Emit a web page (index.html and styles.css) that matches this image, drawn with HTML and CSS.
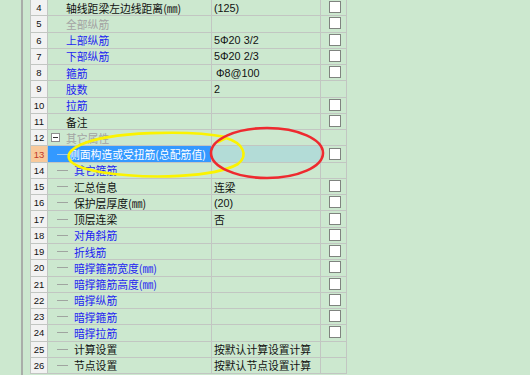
FILE: index.html
```html
<!DOCTYPE html>
<html lang="zh-CN">
<head>
    <meta charset="UTF-8">
    <title>属性编辑</title>
    <link rel="stylesheet" href="styles.css">
</head>
<body>
    <div class="view">
        <div class="edge"></div>
        <div class="sheet">
            <div class="row"><div class="num">4</div><div class="name">轴线距梁左边线距离(㎜)</div><div class="val">(125)</div><div class="chk"><span class="box"></span></div></div>
            <div class="row"><div class="num">5</div><div class="name gray">全部纵筋</div><div class="val"></div><div class="chk"><span class="box"></span></div></div>
            <div class="row"><div class="num">6</div><div class="name blue">上部纵筋</div><div class="val">5Φ20 3/2</div><div class="chk"><span class="box"></span></div></div>
            <div class="row"><div class="num">7</div><div class="name blue">下部纵筋</div><div class="val">5Φ20 2/3</div><div class="chk"><span class="box"></span></div></div>
            <div class="row"><div class="num">8</div><div class="name blue">箍筋</div><div class="val indent">Φ8@100</div><div class="chk"><span class="box"></span></div></div>
            <div class="row"><div class="num">9</div><div class="name blue">肢数</div><div class="val">2</div><div class="chk"></div></div>
            <div class="row"><div class="num">10</div><div class="name blue">拉筋</div><div class="val"></div><div class="chk"><span class="box"></span></div></div>
            <div class="row"><div class="num">11</div><div class="name">备注</div><div class="val"></div><div class="chk"><span class="box"></span></div></div>
            <div class="row"><div class="num">12</div><div class="name group gray"><span class="fold"></span>其它属性</div><div class="val"></div><div class="chk"></div></div>
            <div class="row selected"><div class="num">13</div><div class="name child"><span class="branch"></span>侧面构造或受扭筋(总配筋值)</div><div class="val"></div><div class="chk"><span class="box"></span></div></div>
            <div class="row"><div class="num">14</div><div class="name child blue"><span class="branch"></span>其它箍筋</div><div class="val"></div><div class="chk"></div></div>
            <div class="row"><div class="num">15</div><div class="name child"><span class="branch"></span>汇总信息</div><div class="val">连梁</div><div class="chk"><span class="box"></span></div></div>
            <div class="row"><div class="num">16</div><div class="name child"><span class="branch"></span>保护层厚度(㎜)</div><div class="val">(20)</div><div class="chk"><span class="box"></span></div></div>
            <div class="row"><div class="num">17</div><div class="name child"><span class="branch"></span>顶层连梁</div><div class="val">否</div><div class="chk"><span class="box"></span></div></div>
            <div class="row"><div class="num">18</div><div class="name child blue"><span class="branch"></span>对角斜筋</div><div class="val"></div><div class="chk"><span class="box"></span></div></div>
            <div class="row"><div class="num">19</div><div class="name child blue"><span class="branch"></span>折线筋</div><div class="val"></div><div class="chk"><span class="box"></span></div></div>
            <div class="row"><div class="num">20</div><div class="name child blue"><span class="branch"></span>暗撑箍筋宽度(㎜)</div><div class="val"></div><div class="chk"><span class="box"></span></div></div>
            <div class="row"><div class="num">21</div><div class="name child blue"><span class="branch"></span>暗撑箍筋高度(㎜)</div><div class="val"></div><div class="chk"><span class="box"></span></div></div>
            <div class="row"><div class="num">22</div><div class="name child blue"><span class="branch"></span>暗撑纵筋</div><div class="val"></div><div class="chk"><span class="box"></span></div></div>
            <div class="row"><div class="num">23</div><div class="name child blue"><span class="branch"></span>暗撑箍筋</div><div class="val"></div><div class="chk"><span class="box"></span></div></div>
            <div class="row"><div class="num">24</div><div class="name child blue"><span class="branch"></span>暗撑拉筋</div><div class="val"></div><div class="chk"><span class="box"></span></div></div>
            <div class="row"><div class="num">25</div><div class="name child"><span class="branch"></span>计算设置</div><div class="val">按默认计算设置计算</div><div class="chk"></div></div>
            <div class="row"><div class="num">26</div><div class="name child"><span class="branch"></span>节点设置</div><div class="val">按默认节点设置计算</div><div class="chk"></div></div>
        </div>
    </div>

    <!-- hand-drawn marks over the grid -->
    <svg class="marks" width="530" height="375" viewBox="0 0 530 375">
        <path class="mark-yellow" d="M226 137 C190 130, 110 131, 80 145 C60 155, 66 166, 100 172 C150 180, 215 177, 238 164 C249 155, 243 143, 226 138 L218 142"/>
        <ellipse class="mark-red" cx="267" cy="153" rx="56" ry="25"/>
    </svg>
</body>
</html>
```

FILE: styles.css
```css
body {
    margin: 0;
    background-color: #cce8cf;
    font-family: "Noto Sans CJK SC", sans-serif;
    overflow: hidden;
}

.view {
    display: flex;
    height: 375px;
}

.edge {
    width: 21px;
    border-right: 2px solid #a9aea9;
}

.sheet {
    margin-left: 7px;
    width: 317px;
}

.row {
    display: grid;
    grid-template-columns: 18px 164px 109px 26px;
    height: 16.27px;
}

.row > div {
    box-sizing: border-box;
    border-right: 1px solid #c2c6c2;
    border-bottom: 1px solid #c2c6c2;
    display: flex;
    align-items: center;
    white-space: nowrap;
    overflow: hidden;
}

.num {
    justify-content: center;
    background-color: #f2f2f2;
    font-family: "Liberation Sans", sans-serif;
    font-size: 9.5px;
    color: #111;
    border-left: 1px solid #c2c6c2;
}

.name {
    padding-left: 18px;
    font-size: 10.8px;
    color: #111;
}

.name.blue { color: #1f1ff2; }
.name.gray { color: #a3a3a3; }

.name.group {
    padding-left: 3px;
}

.name.child {
    padding-left: 9px;
}

.fold {
    width: 9px;
    height: 9px;
    box-sizing: border-box;
    border: 1px solid #8e8e8e;
    background: #fff;
    margin-right: 6px;
    position: relative;
}

.fold::before {
    content: "";
    position: absolute;
    left: 1px;
    top: 3px;
    width: 5px;
    height: 1px;
    background: #333;
}

.branch {
    width: 11px;
    height: 1px;
    background: #a0a4a0;
    margin-right: 6px;
}

.val {
    padding-left: 2px;
    font-family: "Liberation Sans", "Noto Sans CJK SC", sans-serif;
    font-size: 10.8px;
    color: #111;
}

.val.indent {
    padding-left: 4px;
}

.chk {
    padding-left: 8px;
}

.box {
    width: 12px;
    height: 12px;
    box-sizing: border-box;
    background: #fff;
    border: 1px solid #7f837f;
    margin-top: -1px;
}

/* selected row */
.selected .num {
    background-color: #f8c99b;
    color: #c0392b;
}

.selected .name {
    background-color: #3399ff;
    color: #fff;
    padding-left: 9px;
}

.selected .branch {
    background: #9cc8f5;
    margin-right: 1px;
}

.selected .val {
    background-color: #b3dcd7;
}

.marks {
    position: absolute;
    top: 0;
    left: 0;
    pointer-events: none;
}

.mark-yellow {
    fill: none;
    stroke: #fbf300;
    stroke-width: 2.6;
    stroke-linecap: round;
}

.mark-red {
    fill: none;
    stroke: #ee2a2f;
    stroke-width: 2.6;
}
```
